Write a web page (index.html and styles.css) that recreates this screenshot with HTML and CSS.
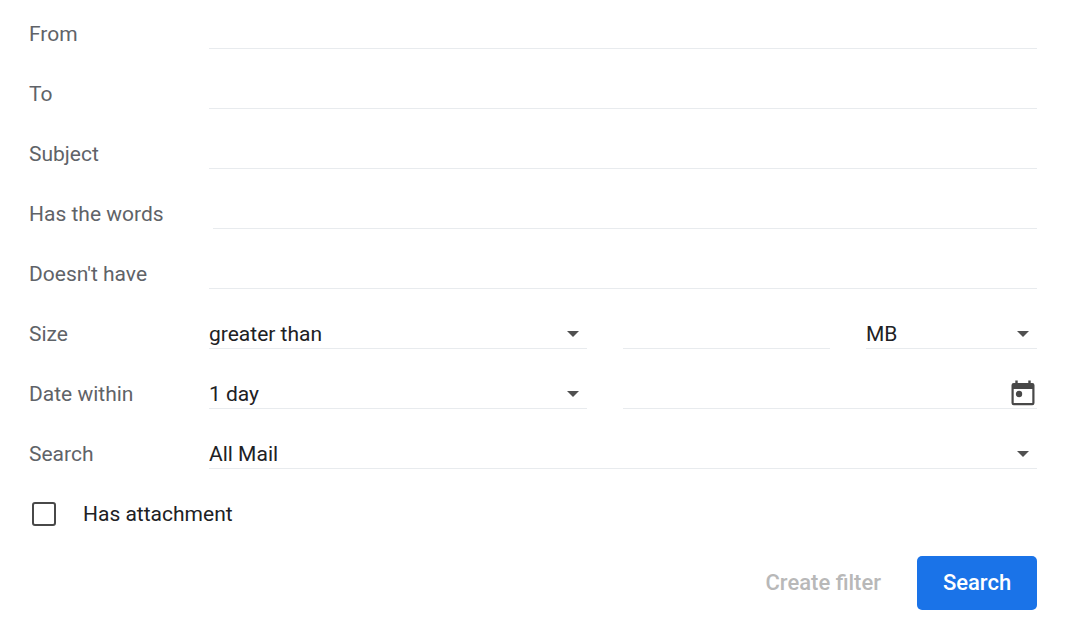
FILE: index.html
```html
<!DOCTYPE html>
<html lang="en">
<head>
<meta charset="utf-8">
<title>Search options</title>
<meta name="viewport" content="width=device-width, initial-scale=1">
<link rel="stylesheet" href="styles.css">
</head>
<body>
<form class="filter">
  <div class="row">
    <label class="label" for="from">From</label>
    <input class="field" id="from" type="text">
  </div>
  <div class="row">
    <label class="label" for="to">To</label>
    <input class="field" id="to" type="text">
  </div>
  <div class="row">
    <label class="label" for="subject">Subject</label>
    <input class="field" id="subject" type="text">
  </div>
  <div class="row">
    <label class="label" for="has">Has the words</label>
    <div class="indent"><input class="field" id="has" type="text"></div>
  </div>
  <div class="row">
    <label class="label" for="hasnot">Doesn't have</label>
    <input class="field" id="hasnot" type="text">
  </div>
  <div class="row">
    <label class="label" for="size-op">Size</label>
    <div class="split">
      <div class="dropdown"><select class="field" id="size-op"><option>greater than</option><option>less than</option></select></div>
      <input class="field" type="text" aria-label="Size value">
      <div class="dropdown"><select class="field" aria-label="Size unit"><option>MB</option><option>KB</option><option>Bytes</option></select></div>
    </div>
  </div>
  <div class="row">
    <label class="label" for="within">Date within</label>
    <div class="split">
      <div class="dropdown"><select class="field" id="within"><option>1 day</option><option>3 days</option><option>1 week</option></select></div>
      <div class="date">
        <input class="date-input" type="text" aria-label="Date">
        <button class="date-button" type="button" aria-label="Choose date">
          <svg class="icon" viewBox="0 0 24 26" aria-hidden="true">
            <path fill="#484848" fill-rule="evenodd" d="M4.300.5h2.400V3h10.600V.5h2.400V3h1.600A2.200 2.200 0 0 1 23.500 5.200V23a2.200 2.200 0 0 1-2.200 2.200H2.700A2.200 2.200 0 0 1 .5 23V5.200A2.200 2.200 0 0 1 2.700 3h1.600zM2.700 9v14h18.600V9z"/>
            <circle cx="8" cy="14" r="3.200" fill="#484848"/>
          </svg>
        </button>
      </div>
    </div>
  </div>
  <div class="row">
    <label class="label" for="where">Search</label>
    <div class="dropdown"><select class="field" id="where"><option>All Mail</option><option>Inbox</option></select></div>
  </div>
  <label class="check"><input class="box" type="checkbox">Has attachment</label>
  <div class="actions">
    <button class="create" type="button" disabled>Create filter</button>
    <button class="search" type="submit">Search</button>
  </div>
</form>
</body>
</html>
```
FILE: styles.css
```css
* {
  box-sizing: border-box;
}

body {
  margin: 0;
  background: #fff;
  color: #202124;
  font: 21px/30px Roboto, "Open Sans", sans-serif;
}

input,
select,
button {
  margin: 0;
  padding: 0;
  border: 0;
  border-radius: 0;
  background: none;
  color: inherit;
  font: inherit;
}

.filter {
  display: flex;
  flex-direction: column;
  gap: 30px;
  padding: 19px 32px 30px 29px;
}

.row {
  display: grid;
  grid-template-columns: 180px minmax(0, 1fr);
}

.label {
  color: #5f6368;
}

.field {
  display: block;
  width: 100%;
  min-width: 0;
  height: 30px;
  border-bottom: 1px solid #e8ebee;
  appearance: none;
}

.indent {
  padding-left: 4px;
}

.split {
  display: grid;
  grid-template-columns: 378fr 207fr 171fr;
  column-gap: 36px;
}

.dropdown {
  position: relative;
}

.dropdown::after {
  content: "";
  position: absolute;
  top: 12px;
  right: 8px;
  border: 6px solid transparent;
  border-top-color: #505050;
  border-bottom: 0;
  pointer-events: none;
}

.date {
  grid-column: span 2;
  display: flex;
  align-items: flex-end;
  height: 30px;
  border-bottom: 1px solid #e8ebee;
}

.date-input {
  flex: 1;
  min-width: 0;
  height: 29px;
}

.date-button {
  display: flex;
  margin: 0 2px 2px 0;
}

.icon {
  width: 24px;
  height: 26px;
}

.check {
  display: flex;
  align-items: center;
  align-self: flex-start;
  gap: 27px;
  padding-left: 3px;
}

.box {
  width: 24px;
  height: 24px;
  border: 2px solid #484848;
  border-radius: 3px;
  appearance: none;
}

.box:checked {
  background: #484848;
}

.actions {
  display: flex;
  justify-content: flex-end;
  gap: 36px;
  margin-top: -3px;
  font-size: 22px;
  font-weight: 500;
}

.create {
  color: #b8b8b8;
}

.search {
  min-width: 120px;
  height: 54px;
  border-radius: 5px;
  background: #1a73e8;
  color: #fff;
}
```
